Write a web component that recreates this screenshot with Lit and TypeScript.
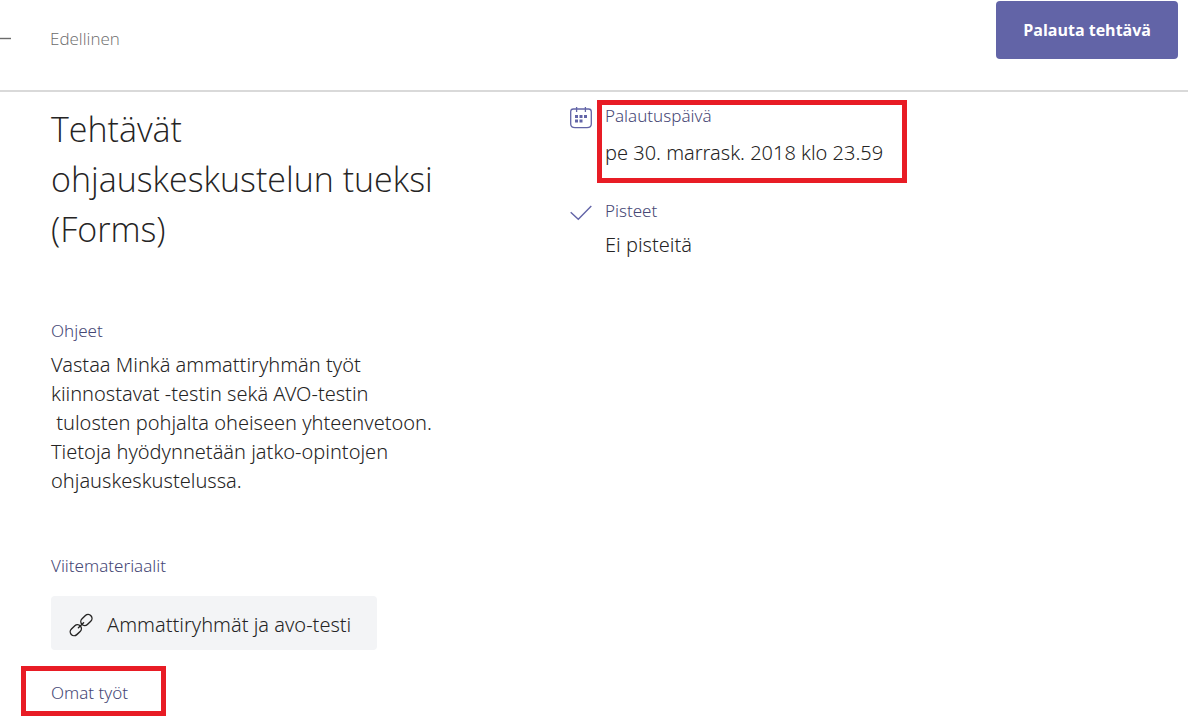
import { LitElement, html, css } from "lit";
import { customElement } from "lit/decorators.js";

@customElement("app-root")
export class AppRoot extends LitElement {
  static styles = css`
    :host {
      display: block;
      min-height: 100vh;
      overflow-x: hidden;
      background: #fff;
      color: #252424;
      font-family: "Open Sans", "Noto Sans", sans-serif;
      font-weight: 300;
    }
    * {
      box-sizing: border-box;
    }
    h1, h2, p {
      margin: 0;
      font-weight: inherit;
    }
    svg {
      display: block;
      flex: none;
      fill: none;
    }
    .topbar {
      display: flex;
      justify-content: space-between;
      align-items: flex-start;
      height: 92px;
      padding: 1px 10px 0 0;
      border-bottom: 2px solid #d9d9d9;
    }
    .back {
      display: flex;
      align-items: center;
      gap: 39px;
      height: 75px;
      padding: 0;
      border: 0;
      background: none;
      color: #6b6b6b;
      font: inherit;
      font-size: 17px;
      line-height: 24px;
    }
    .submit {
      height: 58px;
      padding: 0 27px;
      border: 0;
      border-radius: 4px;
      background: #6264a7;
      color: #fff;
      font: inherit;
      font-size: 16px;
      font-weight: 700;
      line-height: 24px;
    }
    .content {
      display: grid;
      grid-template-columns: 519px 1fr;
      padding: 12px 51px 18px;
    }
    .main {
      max-width: 396px;
    }
    .title {
      font-size: 34px;
      line-height: 50px;
    }
    .label,
    .text,
    .material {
      font-family: "Noto Sans", "Open Sans", sans-serif;
    }
    .label {
      color: #464775;
      font-size: 17px;
      line-height: 24px;
    }
    .text {
      font-size: 20px;
      line-height: 29px;
    }
    .section {
      margin-top: 59px;
    }
    .instructions {
      margin-top: 65px;
    }
    .instructions .text {
      margin-top: 7px;
    }
    .material {
      display: inline-flex;
      align-items: center;
      gap: 14px;
      height: 54px;
      margin-top: 18px;
      padding: 3px 26px 0 18px;
      border-radius: 4px;
      background: #f3f4f6;
      color: inherit;
      font-size: 20px;
      line-height: 29px;
      text-decoration: none;
      vertical-align: top;
    }
    .own {
      margin-top: 31px;
    }
    .marked {
      position: relative;
      width: fit-content;
    }
    .marked::after {
      content: "";
      position: absolute;
      border: 5px solid #e81c25;
      pointer-events: none;
    }
    .own.marked::after {
      inset: -15px -38px -11px -30px;
    }
    .due.marked::after {
      inset: -4px -24px -16px -8px;
    }
    .facts {
      display: flex;
      flex-direction: column;
      gap: 32px;
    }
    .fact {
      display: flex;
      gap: 13px;
    }
    .fact svg {
      margin-top: 2px;
    }
    .due .text {
      margin-top: 10px;
    }
    .points .text {
      margin-top: 7px;
    }
  `;

  render() {
    return html`
      <header class="topbar">
        <button class="back" type="button">
          <svg width="11" height="12" viewBox="0 0 11 12" stroke="#6b6b6b" stroke-width="1.4" aria-hidden="true">
            <path d="M0 5.5H11" />
          </svg>
          Edellinen
        </button>
        <button class="submit" type="button">Palauta tehtävä</button>
      </header>
      <main class="content">
        <div class="main">
          <h1 class="title">Tehtävät ohjauskeskustelun tueksi (Forms)</h1>
          <section class="instructions">
            <h2 class="label">Ohjeet</h2>
            <p class="text">Vastaa Minkä ammattiryhmän työt kiinnostavat -testin sekä AVO-testin &nbsp;tulosten pohjalta oheiseen yhteenvetoon. Tietoja hyödynnetään jatko-opintojen ohjauskeskustelussa.</p>
          </section>
          <section class="section">
            <h2 class="label">Viitemateriaalit</h2>
            <a class="material" href="#">
              <svg width="24" height="24" viewBox="0 0 24 24" stroke="#252424" stroke-width="1.4" stroke-linecap="round" aria-hidden="true">
                <rect x="11.2" y="3.1" width="12.4" height="7.8" rx="3.9" transform="rotate(-43 17.4 7)" />
                <rect x="0.6" y="13.3" width="12.4" height="7.8" rx="3.9" transform="rotate(-43 6.8 17.2)" />
                <path d="M9.4 14.7L14.6 9.7" />
              </svg>
              Ammattiryhmät ja avo-testi
            </a>
          </section>
          <h2 class="label own marked">Omat työt</h2>
        </div>
        <div class="facts">
          <section class="fact">
            <svg width="22" height="24" viewBox="0 0 22 24" stroke="#6264a7" stroke-width="1.3" aria-hidden="true">
              <path d="M3.5 3H18.5Q21.3 3 21.3 5.8V18Q21.3 21.6 17 21.6H5Q.7 21.6 .7 18V5.8Q.7 3 3.5 3Z" />
              <path d="M6.6 1V6M15.4 1V6" />
              <path fill="#6264a7" stroke="none" d="M5 9h3v3H5zM9.5 9h3v3h-3zM14 9h3v3h-3zM5 13.5h3v3H5zM9.5 13.5h3v3h-3z" />
            </svg>
            <div class="due marked">
              <h2 class="label">Palautuspäivä</h2>
              <p class="text">pe 30. marrask. 2018 klo 23.59</p>
            </div>
          </section>
          <section class="fact">
            <svg width="22" height="24" viewBox="0 0 22 24" stroke="#6264a7" stroke-width="1.4" aria-hidden="true">
              <path d="M.7 11.2L8.3 18.2L21.3 5" />
            </svg>
            <div class="points">
              <h2 class="label">Pisteet</h2>
              <p class="text">Ei pisteitä</p>
            </div>
          </section>
        </div>
      </main>
    `;
  }
}
